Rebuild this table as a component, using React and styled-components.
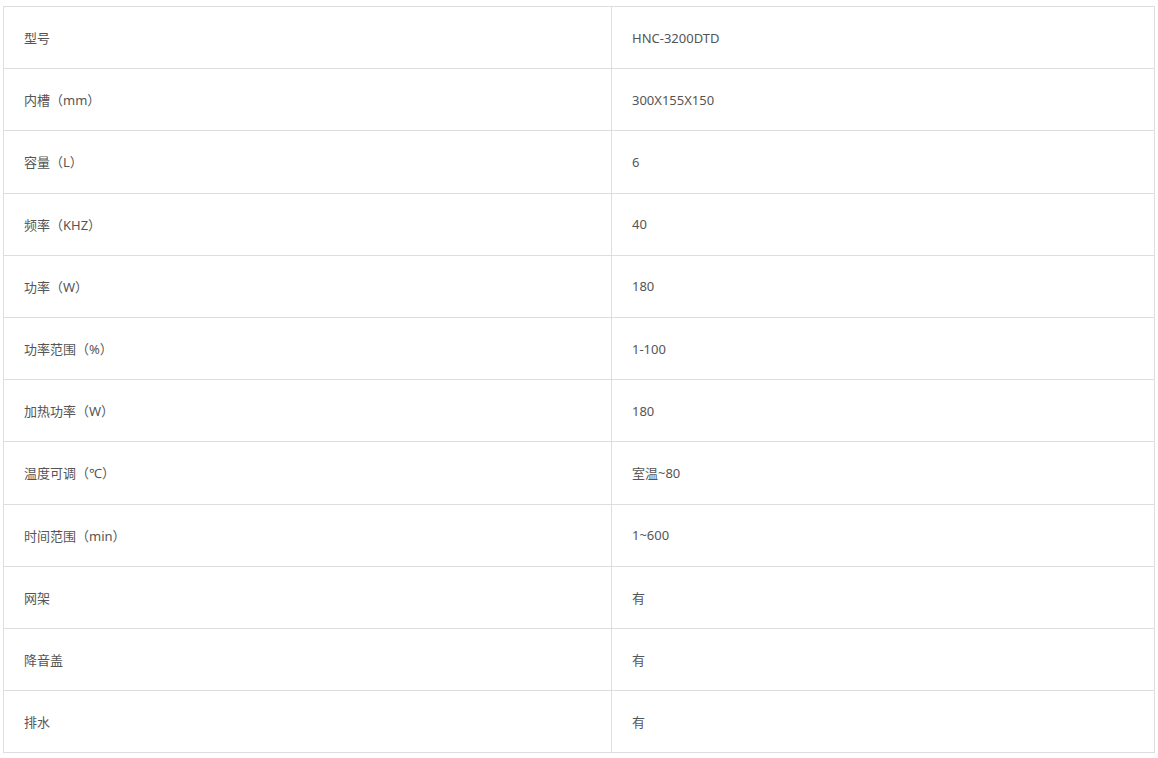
import React from 'react';
import styled, { createGlobalStyle } from 'styled-components';

const GlobalStyle = createGlobalStyle`
  body {
    margin: 0;
    background: #fff;
    font-family: "Noto Sans", "Noto Sans CJK SC", sans-serif;
  }
`;

const Page = styled.div`
  padding: 6px 3px;
`;

const Table = styled.table`
  width: 1152px;
  border-collapse: collapse;
  table-layout: fixed;
`;

const Row = styled.tr``;

const Cell = styled.td`
  width: ${(p) => (p.$label ? '587px' : 'auto')};
  height: 61.2px;
  padding: 0 0 0 20px;
  border: 1px solid #dedede;
  font-size: 13px;
  color: #555;
  vertical-align: middle;
`;

const specs = [
  ['型号', 'HNC-3200DTD'],
  ['内槽（mm）', '300X155X150'],
  ['容量（L）', '6'],
  ['频率（KHZ）', '40'],
  ['功率（W）', '180'],
  ['功率范围（%）', '1-100'],
  ['加热功率（W）', '180'],
  ['温度可调（℃）', '室温~80'],
  ['时间范围（min）', '1~600'],
  ['网架', '有'],
  ['降音盖', '有'],
  ['排水', '有'],
];

const App = () => {
  return (
    <Page>
      <GlobalStyle />
      <Table>
        <tbody>
          {specs.map(([label, value]) => (
            <Row key={label}>
              <Cell $label>{label}</Cell>
              <Cell>{value}</Cell>
            </Row>
          ))}
        </tbody>
      </Table>
    </Page>
  );
};

export default App;
